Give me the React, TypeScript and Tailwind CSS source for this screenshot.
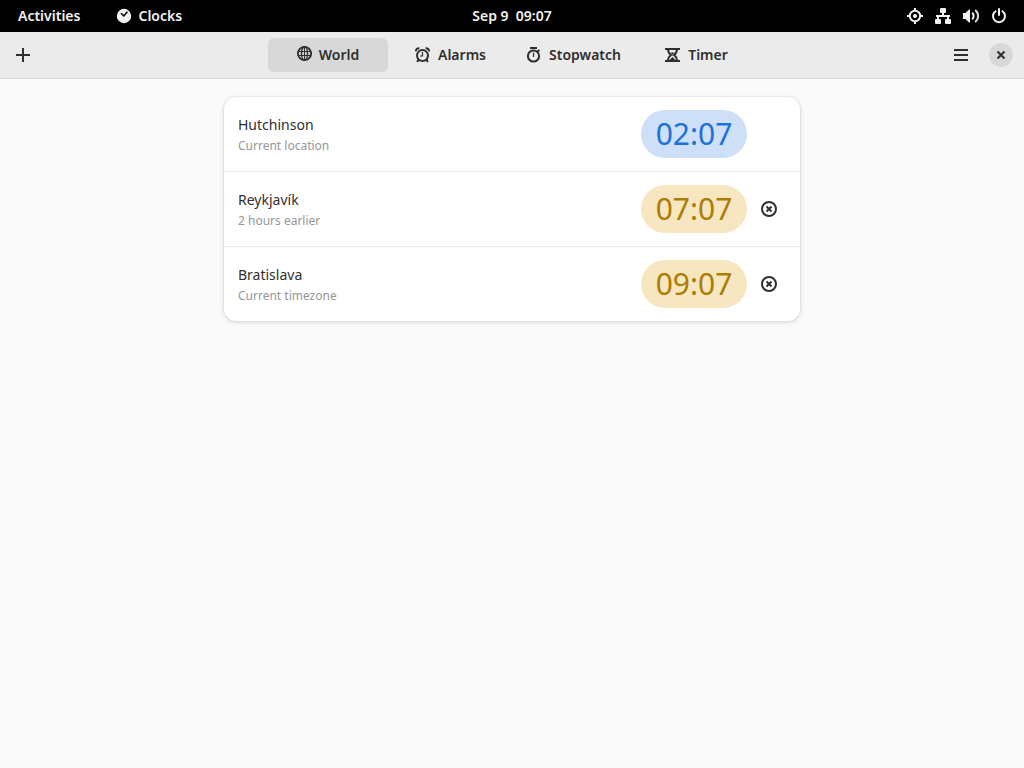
import { useState, type ReactNode } from "react";

type IconProps = { children: ReactNode; className?: string };

function Icon({ children, className = "" }: IconProps) {
  return (
    <svg
      viewBox="0 0 16 16"
      aria-hidden="true"
      fill="none"
      stroke="currentColor"
      strokeWidth="2"
      className={`h-4 w-4 shrink-0 ${className}`}
    >
      {children}
    </svg>
  );
}

const ClockIcon = () => (
  <Icon>
    <circle cx="8" cy="8" r="7.2" fill="currentColor" stroke="none" />
    <path d="M5 5.2 7.8 8 11.400 3.800" stroke="#000" strokeWidth="1.500" />
  </Icon>
);

const LocationIcon = () => (
  <Icon>
    <circle cx="8" cy="8" r="5.2" />
    <circle cx="8" cy="8" r="2.1" fill="currentColor" stroke="none" />
    <path d="M8 0v3M8 13v3M0 8h3M13 8h3" />
  </Icon>
);

const NetworkIcon = () => (
  <Icon>
    <g fill="currentColor" stroke="none">
      <rect x="5" y="0" width="6" height="5" rx="1" />
      <rect x="0" y="11" width="6" height="5" rx="1" />
      <rect x="10" y="11" width="6" height="5" rx="1" />
      <path d="M7 4h2v3h6v2H1V7h6z" />
      <path d="M2 8h2v4H2zM12 8h2v4h-2z" />
    </g>
  </Icon>
);

const VolumeIcon = () => (
  <Icon>
    <path d="M0 5h2.5L6 1.5h1v13H6L2.5 11H0z" fill="currentColor" stroke="none" />
    <path d="M9.2 4.8c1.9 1.8 1.9 4.6 0 6.4" />
    <path d="M12.2 2c3.9 3.4 3.9 8.6 0 12" opacity="0.9" />
  </Icon>
);

const PowerIcon = () => (
  <Icon>
    <path d="M4.6 3.2a6 6 0 1 0 6.8 0" strokeLinecap="round" />
    <path d="M8 1v6" strokeLinecap="round" />
  </Icon>
);

const GlobeIcon = () => (
  <Icon className="-translate-y-px">
    <circle cx="8.5" cy="7.5" r="6.6" strokeWidth="1.9" />
    <ellipse cx="8.5" cy="7.5" rx="3" ry="6.6" strokeWidth="1.4" />
    <path d="M8.5 1v13" strokeWidth="1" />
    <path d="M2 5.5h13M2 9.5h13" strokeWidth="1.2" />
  </Icon>
);

const AlarmIcon = () => (
  <Icon>
    <circle cx="7.5" cy="8.5" r="5.5" />
    <path d="M1 4.4C.8 2.400 2.200 1 4.400 1.200M14 4.400C14.200 2.400 12.800 1 10.600 1.200" />
    <path d="M7.5 5v4H5" strokeWidth="1.2" />
    <path d="M3.6 12.200 2.200 15M11.400 12.200l1.400 2.800" />
  </Icon>
);

const StopwatchIcon = () => (
  <Icon>
    <circle cx="7.5" cy="9" r="5.600" />
    <path d="M4 1h7" />
    <path d="M7.5 5.500V10" strokeWidth="1.200" />
    <path d="m11 5 2.400-2" />
  </Icon>
);

const TimerIcon = () => (
  <Icon>
    <path d="M0 2h15M0 14h15" />
    <path d="M3 2c0 3 .8 4.600 3.200 6C3.800 9.400 3 11 3 14M12 2c0 3-.8 4.600-3.200 6 2.400 1.400 3.200 3 3.200 6" />
    <path d="M5.500 5.500h4l-2 2zM4.500 13l3-3 3 3z" fill="currentColor" stroke="none" />
  </Icon>
);

const PlusIcon = () => (
  <Icon>
    <path d="M8 1v14M1 8h14" />
  </Icon>
);

const MenuIcon = () => (
  <Icon>
    <path d="M1 3h14M1 8h14M1 13h14" />
  </Icon>
);

const CloseIcon = () => (
  <Icon>
    <path d="m4.5 4.5 7 7M11.5 4.5l-7 7" />
  </Icon>
);

const RemoveIcon = () => (
  <Icon>
    <circle cx="8" cy="8" r="7" />
    <path d="m5.5 5.5 5 5M10.5 5.5l-5 5" />
  </Icon>
);

const tabs = [
  { name: "World", icon: <GlobeIcon /> },
  { name: "Alarms", icon: <AlarmIcon /> },
  { name: "Stopwatch", icon: <StopwatchIcon /> },
  { name: "Timer", icon: <TimerIcon /> },
];

const clocks = [
  { city: "Hutchinson", note: "Current location", time: "02:07", night: true, removable: false },
  { city: "Reykjavík", note: "2 hours earlier", time: "07:07", night: false, removable: true },
  { city: "Bratislava", note: "Current timezone", time: "09:07", night: false, removable: true },
];

function TopBar() {
  return (
    <div className="grid h-8 grid-cols-[1fr_auto_1fr] items-center bg-black px-[18px] text-sm font-semibold text-[#f2f2f2]">
      <div className="flex items-center gap-9">
        <button type="button">Activities</button>
        <button type="button" className="flex items-center gap-1.5">
          <ClockIcon />
          Clocks
        </button>
      </div>
      <button type="button" className="whitespace-pre">
        Sep 9  09:07
      </button>
      <button type="button" aria-label="System menu" className="-mr-px flex items-center gap-3 justify-self-end">
        <LocationIcon />
        <NetworkIcon />
        <VolumeIcon />
        <PowerIcon />
      </button>
    </div>
  );
}

export default function App() {
  const [active, setActive] = useState("World");

  return (
    <div className="min-h-screen bg-[#fafafa] font-['Noto_Sans',sans-serif] text-[#2f2f2f]">
      <TopBar />
      <header className="grid h-[47px] grid-cols-[1fr_auto_1fr] items-center border-b border-[#d8d8d8] bg-[#ebebeb] px-1.5">
        <button type="button" aria-label="Add world clock" className="flex h-[34px] w-[34px] items-center justify-center">
          <PlusIcon />
        </button>
        <nav className="flex gap-[3px]">
          {tabs.map((tab) => (
            <button
              key={tab.name}
              type="button"
              aria-pressed={active === tab.name}
              onClick={() => setActive(tab.name)}
              className={`flex h-[34px] w-[120px] items-center justify-center gap-[7px] rounded-md text-sm font-semibold ${
                active === tab.name ? "bg-[#d8d8d8]" : ""
              }`}
            >
              {tab.icon}
              {tab.name}
            </button>
          ))}
        </nav>
        <div className="flex items-center gap-[11px] justify-self-end pr-[5px]">
          <button type="button" aria-label="Main menu" className="flex h-[34px] w-[34px] items-center justify-center">
            <MenuIcon />
          </button>
          <button type="button" aria-label="Close" className="flex h-6 w-6 items-center justify-center rounded-full bg-[#d8d8d8]">
            <CloseIcon />
          </button>
        </div>
      </header>
      <main className="px-4 py-[18px]">
        <ul className="mx-auto max-w-[576px] divide-y divide-[#ebebeb] rounded-xl bg-white shadow-[0_0_0_1px_rgba(0,0,0,0.03),0_1px_3px_1px_rgba(0,0,0,0.07),0_2px_6px_2px_rgba(0,0,0,0.03)]">
          {clocks.map((clock) => (
            <li key={clock.city} className="flex items-center py-[13px] pr-[23px] pl-3.5">
              <div className="min-w-0 flex-1 pt-0.5">
                <p className="truncate text-sm leading-[22px]">{clock.city}</p>
                <p className="truncate text-xs leading-5 text-[#979797]">{clock.note}</p>
              </div>
              <time
                className={`flex h-12 w-[106px] items-center justify-center rounded-full text-[30px] leading-[46px] ${
                  clock.night ? "bg-[#cde0f8] text-[#1c71d8]" : "bg-[#f7e7c0] text-[#ae7b03]"
                }`}
              >
                {clock.time}
              </time>
              <div className="ml-3.5 flex w-4">
                {clock.removable && (
                  <button type="button" aria-label={`Remove ${clock.city}`}>
                    <RemoveIcon />
                  </button>
                )}
              </div>
            </li>
          ))}
        </ul>
      </main>
    </div>
  );
}
